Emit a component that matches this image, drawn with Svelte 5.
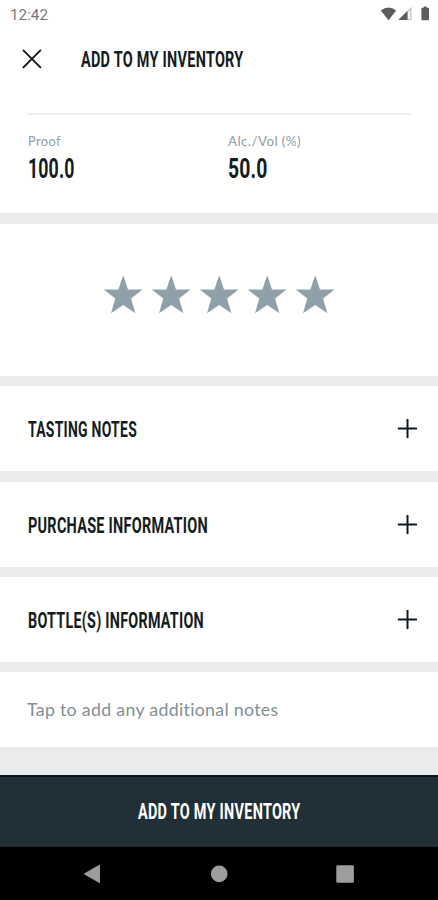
<script>
  const rows = [
    { label: 'TASTING NOTES', width: 109, height: 85, gap: 11 },
    { label: 'PURCHASE INFORMATION', width: 180, height: 85, gap: 10 },
    { label: 'BOTTLE(S) INFORMATION', width: 176, height: 85, gap: 10 }
  ];
  const stars = [1, 2, 3, 4, 5];
</script>

{#snippet fitted(text, width, cap, kind)}
  <svg class="fitted {kind}" {width} height={cap} role="img" aria-label={text}>
    <text x="0" y={cap} textLength={width} lengthAdjust="spacingAndGlyphs">{text}</text>
  </svg>
{/snippet}

<div class="screen">
  <div class="status">
    {@render fitted('12:42', 38, 10.5, 'clock')}
    <svg class="indicators" width="51" height="16" viewBox="0 0 51 16">
      <path d="M.8 4.4Q8.5-1.3 16.2 4.4L8.5 14.2Z" fill="#5c5c5c" />
      <path d="M31.5.8V14H18.3Z" fill="#c4c4c4" />
      <path d="M27.4 4.9V14H18.3Z" fill="#5c5c5c" />
      <path d="M28.2 6V12.7H30.1V4.1Z" fill="#fff" />
      <path d="M41.9 1.8h1.8V.5h3v1.3h1.8q.5 0 .5.6v11q0 .8-.7.8h-6.2q-.7 0-.7-.8v-11q0-.6.5-.6Z" fill="#5c5c5c" />
    </svg>
  </div>

  <header>
    <svg width="20" height="20" viewBox="0 0 20 20">
      <path d="M1.4 1.4 18.4 18.4M18.4 1.4 1.4 18.4" fill="none" stroke="#10171b" stroke-width="1.9" stroke-linecap="round" />
    </svg>
    {@render fitted('ADD TO MY INVENTORY', 162.5, 15.6, 'heading')}
  </header>

  <section class="facts">
    <div class="fact">
      {@render fitted('Proof', 33, 9, 'label')}
      {@render fitted('100.0', 46.5, 19, 'value')}
    </div>
    <div class="fact">
      {@render fitted('Alc./Vol (%)', 73, 9, 'label')}
      {@render fitted('50.0', 39.5, 19, 'value')}
    </div>
  </section>

  <section class="rating">
    {#each stars as star (star)}
      <svg width="40" height="39" viewBox="0 0 40 39">
        <path d="M20.2 .3 25 14.4 39.6 14.6 28.1 23.6 32.4 38.2 20.2 29.9 8 38.2 12.3 23.6.8 14.6 15.4 14.4Z" fill="#90a0aa" />
      </svg>
    {/each}
  </section>

  {#each rows as row (row.label)}
    <section class="row" style="height: {row.height}px; margin-bottom: {row.gap}px">
      {@render fitted(row.label, row.width, 15.6, 'heading')}
      <svg width="20" height="20" viewBox="0 0 20 20">
        <path d="M10.5 .7V18.3M1.7 9.5H19.3" fill="none" stroke="#10191e" stroke-width="2" stroke-linecap="round" />
      </svg>
    </section>
  {/each}

  <section class="notes">
    {@render fitted('Tap to add any additional notes', 251.5, 12.4, 'hint')}
  </section>

  <div class="submit">
    {@render fitted('ADD TO MY INVENTORY', 162.5, 15.6, 'heading light')}
  </div>

  <nav>
    <svg width="18" height="20" viewBox="0 0 18 20">
      <path d="M16.5 1.2V18.6L1.3 9.9Z" fill="#9d9d9d" stroke="#9d9d9d" stroke-width="1" stroke-linejoin="round" />
    </svg>
    <svg width="18" height="20" viewBox="0 0 18 20">
      <circle cx="9.2" cy="9.9" r="8.3" fill="#9d9d9d" />
    </svg>
    <svg width="18" height="20" viewBox="0 0 18 20">
      <rect x=".3" y="1.2" width="17.6" height="17.6" rx="1.2" fill="#9d9d9d" />
    </svg>
  </nav>
</div>

<style>
  :global(body) {
    margin: 0;
  }
  .screen {
    display: flex;
    flex-direction: column;
    width: 438px;
    height: 900px;
    overflow: hidden;
    background: #e9ebec;
    font-family: Roboto, 'Liberation Sans', sans-serif;
  }
  svg {
    display: block;
    flex: none;
  }
  .fitted {
    overflow: visible;
    font-variant-ligatures: none;
  }
  .heading {
    font-size: 22px;
    font-weight: 700;
    letter-spacing: 0.4px;
    fill: #151c20;
  }
  .light {
    fill: #fff;
  }
  .value {
    font-size: 27px;
    font-weight: 700;
    letter-spacing: 0.2px;
    fill: #151c20;
  }
  .label {
    font-family: Lato, sans-serif;
    font-size: 12.5px;
    letter-spacing: 0.4px;
    fill: #8f9da6;
  }
  .hint {
    font-family: Lato, sans-serif;
    font-size: 17.5px;
    letter-spacing: 0.3px;
    fill: #819094;
  }
  .clock {
    font-size: 14.7px;
    fill: #777;
  }
  .status {
    box-sizing: border-box;
    display: flex;
    justify-content: space-between;
    align-items: flex-start;
    height: 30px;
    padding: 6px 7px 0 10px;
    background: #fff;
  }
  .status .clock {
    margin-top: 3px;
  }
  header {
    box-sizing: border-box;
    display: flex;
    align-items: center;
    gap: 39px;
    height: 58px;
    padding-left: 22px;
    background: #fff;
  }
  .facts {
    box-sizing: border-box;
    display: flex;
    height: 125px;
    margin-bottom: 11px;
    padding: 25px 26px 0 27px;
    background: #fff;
  }
  .fact {
    display: flex;
    flex-direction: column;
    gap: 13.5px;
    flex: 0 0 200.5px;
    box-sizing: border-box;
    padding: 21.5px 0 0 0.5px;
    height: 80px;
    border-top: 2px solid #eff0f0;
  }
  .fact + .fact {
    flex: 1;
  }
  .rating {
    box-sizing: border-box;
    display: flex;
    justify-content: center;
    gap: 8.2px;
    height: 152px;
    margin-bottom: 10px;
    padding-top: 51px;
    background: #fff;
  }
  .row {
    box-sizing: border-box;
    display: flex;
    align-items: center;
    justify-content: space-between;
    padding: 0 21px 0 27.5px;
    background: #fff;
  }
  .notes {
    box-sizing: border-box;
    display: flex;
    height: 75px;
    margin-bottom: 28px;
    padding: 31.5px 0 0 27px;
    background: #fff;
  }
  .submit {
    box-sizing: border-box;
    display: flex;
    align-items: center;
    justify-content: center;
    height: 72px;
    padding-bottom: 2px;
    border-top: 2px solid #07131a;
    background: #212f36;
  }
  nav {
    box-sizing: border-box;
    display: flex;
    align-items: center;
    justify-content: space-between;
    height: 53px;
    padding: 0 84px 0 83px;
    background: #000;
  }
</style>
